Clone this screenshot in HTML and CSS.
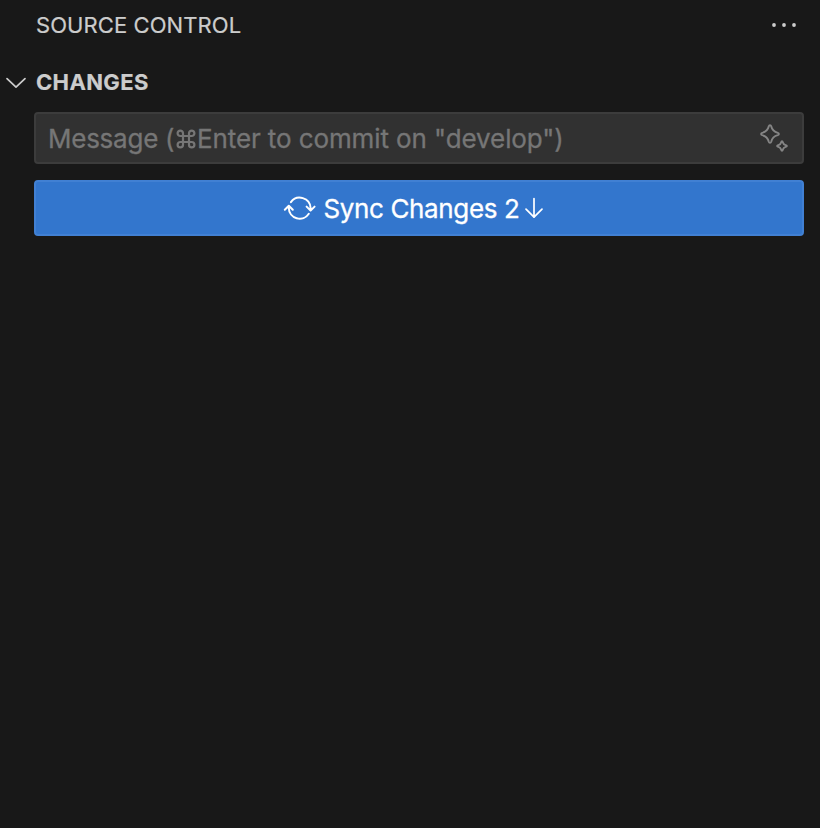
FILE: index.html
```html
<!DOCTYPE html>
<html lang="en">
<head>
<meta charset="utf-8">
<title>Source Control</title>
<link rel="stylesheet" href="styles.css">
</head>
<body>
<main class="panel">
  <header class="panel-header">
    <h1 class="panel-title">SOURCE CONTROL</h1>
    <svg class="more" width="28" height="8" viewBox="0 0 28 8"><circle cx="4" cy="4" r="1.9"/><circle cx="14" cy="4" r="1.9"/><circle cx="24" cy="4" r="1.9"/></svg>
  </header>
  <div class="section-header">
    <svg class="icon chevron" width="24" height="14" viewBox="0 0 24 14"><path d="M3 2.600 12 11.200l9-8.600"/></svg>
    <h2 class="section-title">CHANGES</h2>
  </div>
  <div class="message-box">
    <span class="placeholder"><span class="placeholder-start">Message (</span><svg class="icon command" width="20" height="20" viewBox="0 0 20 20"><path d="M7 7V4.300A2.700 2.700 0 1 0 4.300 7h11.400A2.700 2.700 0 1 0 13 4.300v11.400a2.700 2.700 0 1 0 2.700-2.700H4.300A2.700 2.700 0 1 0 7 15.700V7"/></svg><span class="placeholder-rest">Enter to commit on "develop")</span></span>
    <svg class="icon sparkle" width="32" height="32" viewBox="0 0 32 32"><path d="M12 3.100c-.7 0-1 .4-1.200 1.100C9.800 8.300 8.300 9.800 4.200 10.800c-.7.2-1.100.5-1.100 1.200s.4 1 1.100 1.200c4.100 1 5.600 2.500 6.600 6.600.2.700.5 1.100 1.200 1.100s1-.4 1.200-1.100c1-4.100 2.500-5.600 6.600-6.600.7-.2 1.100-.5 1.100-1.200s-.4-1-1.100-1.200c-4.100-1-5.600-2.500-6.600-6.600C13 3.500 12.700 3.100 12 3.100Z"/><path d="M24 19.100c-.6 0-.7.6-.9 1.300-.5 1.700-1 2.200-2.700 2.700-.7.2-1.300.3-1.300.9s.6.7 1.300.9c1.700.5 2.200 1 2.700 2.700.2.700.3 1.300.9 1.300s.7-.6.9-1.300c.5-1.700 1-2.200 2.700-2.700.7-.2 1.300-.3 1.300-.9s-.6-.7-1.300-.9c-1.700-.5-2.200-1-2.700-2.700-.2-.7-.3-1.300-.9-1.300Z"/></svg>
  </div>
  <button class="sync-button">
    <svg class="icon sync" width="34" height="28" viewBox="0 0 34 28"><path d="M7.900 8.200A10.900 10.900 0 0 1 27.600 14v2.600M23.600 12.600l4 4 4-4M25.800 19.800A10.900 10.900 0 0 1 5.800 14v-2.300M1.800 15.700l4-4 4 4"/></svg>
    <span class="sync-label">Sync Changes 2</span>
    <svg class="icon arrow" width="20" height="24" viewBox="0 0 20 24"><path d="M10 2.600v18.600M2 13.200l8 8 8-8"/></svg>
  </button>
</main>
</body>
</html>
```
FILE: styles.css
```css
* { box-sizing: border-box; }
body {
  margin: 0;
  background: #181818;
  color: #ccc;
  font-family: Inter, "Liberation Sans", sans-serif;
}
.panel { min-height: 100vh; }
h1, h2 { margin: 0; }
.icon {
  flex: none;
  fill: none;
  stroke: currentColor;
  stroke-width: 1.7;
  stroke-linecap: round;
  stroke-linejoin: round;
}
.panel-header {
  display: flex;
  align-items: center;
  justify-content: space-between;
  height: 50px;
  padding: 0 22px 0 36px;
}
.panel-title {
  font-size: 22px;
  font-weight: 400;
  letter-spacing: .08px;
  white-space: nowrap;
  -webkit-text-stroke: .2px currentColor;
}
.more { fill: currentColor; }
.section-header {
  display: flex;
  align-items: center;
  gap: 8px;
  height: 44px;
  margin-top: 10px;
  padding-left: 4px;
}
.chevron { position: relative; top: 1px; }
.section-title {
  font-size: 22px;
  font-weight: 700;
  letter-spacing: .35px;
  -webkit-text-stroke: .2px currentColor;
}
.message-box {
  display: flex;
  align-items: center;
  justify-content: space-between;
  height: 52px;
  margin: 8px 16px 0 34px;
  padding: 0 12px;
  border: 2px solid #3c3c3c;
  border-radius: 4px;
  background: #313131;
  color: #767676;
  font-size: 26px;
}
.placeholder {
  display: flex;
  align-items: center;
  padding-top: 1px;
  white-space: pre;
  -webkit-text-stroke: .3px currentColor;
}
.placeholder-start { letter-spacing: -.25px; }
.placeholder-rest { letter-spacing: -.1px; }
.command { margin: 0 1.3px 0 1.3px; stroke-width: 2.2; }
.sparkle { color: #858585; stroke-width: 1.9; }
.sync-button {
  display: flex;
  align-items: center;
  justify-content: center;
  width: 770px;
  height: 56px;
  margin: 16px 16px 0 34px;
  padding: 0 11px 0 0;
  border: 2px solid #4180d3;
  border-radius: 4px;
  background: #3376cd;
  color: #fff;
  font: 400 26px Inter, "Liberation Sans", sans-serif;
}
.sync { margin-right: 7px; stroke-width: 2; }
.sync-label {
  padding-top: 1px;
  letter-spacing: -.37px;
  -webkit-text-stroke: .3px currentColor;
}
.arrow { margin-left: 5px; }
```
